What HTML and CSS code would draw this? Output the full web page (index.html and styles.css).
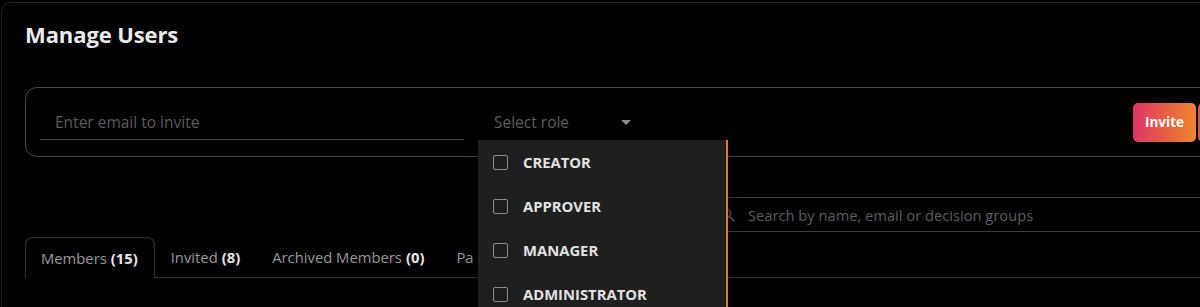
FILE: index.html
```html
<!DOCTYPE html>
<html lang="en">
<head>
<meta charset="utf-8">
<title>Manage Users</title>
<link rel="stylesheet" href="styles.css">
</head>
<body>
<div class="card">
  <h1 class="title">Manage Users</h1>

  <div class="invite-box">
    <div class="email-field"><span class="placeholder">Enter email to invite</span></div>
    <div class="role-select">
      <span class="placeholder">Select role</span>
      <svg class="caret" width="10" height="5" viewBox="0 0 10 5"><path d="M0 0 L10 0 L5 5 Z" fill="#8a8a8a"/></svg>
    </div>
    <div class="actions">
      <button class="btn-invite">Invite</button>
      <button class="btn-invite btn-next"></button>
    </div>
  </div>

  <div class="search-row">
    <div class="search-box">
      <svg class="search-icon" width="14" height="14" viewBox="0 0 14 14"><circle cx="5.5" cy="5.5" r="4.2" fill="none" stroke="#555" stroke-width="1.6"/><path d="M8.6 8.6 L12.8 12.8" stroke="#555" stroke-width="1.8" stroke-linecap="round"/></svg>
      <span class="placeholder search-ph">Search by name, email or decision groups</span>
    </div>
  </div>

  <div class="tabs">
    <div class="tab active">Members <b>(15)</b></div>
    <div class="tab">Invited <b>(8)</b></div>
    <div class="tab">Archived Members <b>(0)</b></div>
    <div class="tab">Pa</div>
    <div class="tab-fill"></div>
  </div>
</div>

<div class="dropdown">
  <div class="option"><span class="check"></span>CREATOR</div>
  <div class="option"><span class="check"></span>APPROVER</div>
  <div class="option"><span class="check"></span>MANAGER</div>
  <div class="option"><span class="check"></span>ADMINISTRATOR</div>
</div>
</body>
</html>
```

FILE: styles.css
```css
* { box-sizing: border-box; }
html, body {
  margin: 0;
  padding: 0;
  background: #000;
  overflow: hidden;
  height: 307px;
}
body {
  font-family: "Open Sans", "Noto Sans", sans-serif;
  color: #e6e6e6;
  position: relative;
}
.card {
  margin: 2px 0 0 1px;
  width: 1260px;
  height: 400px;
  border: 1px solid #262626;
  border-radius: 10px;
  padding: 16px 0 0 23px;
  background: #000;
}
.title {
  margin: 0;
  font-size: 22px;
  line-height: 30px;
  font-weight: 700;
  color: #ececec;
  letter-spacing: -0.1px;
}
.invite-box {
  margin-top: 38px;
  height: 70px;
  border: 1px solid #4a4a4a;
  border-radius: 12px;
  display: flex;
  align-items: center;
  padding: 0 0 0 14px;
}
.placeholder {
  color: #5c5c5c;
  font-size: 15.5px;
}
.email-field {
  width: 424px;
  height: 36px;
  border-bottom: 1px solid #4a4a4a;
  display: flex;
  align-items: center;
  padding: 0 0 0 15px;
}
.role-select {
  width: 180px;
  height: 36px;
  display: flex;
  align-items: center;
  padding: 0 0 0 30px;
}
.caret { margin-left: 52px; }
.actions {
  margin-left: 489px;
  display: flex;
  gap: 2px;
}
.btn-invite {
  width: 63px;
  height: 39px;
  border: none;
  border-radius: 5px;
  background: linear-gradient(90deg, #df3569 0%, #e8613f 55%, #ef8531 100%);
  color: #fff;
  font-family: inherit;
  font-weight: 700;
  font-size: 13.5px;
  padding: 0 0 1px 0;
}
.btn-next { width: 40px; background: #e0533e; }
.search-row {
  display: flex;
  margin-top: 40px;
}
.search-box {
  margin-left: 689px;
  width: 560px;
  height: 35px;
  border-top: 1px solid #3c3c3c;
  border-bottom: 1px solid #3c3c3c;
  display: flex;
  align-items: center;
  padding-left: 7px;
}
.search-icon { margin-right: 13px; }
.search-ph { font-size: 14.7px; }
.tabs {
  margin-top: 5px;
  display: flex;
  height: 41px;
}
.tab {
  padding: 0 16px;
  display: flex;
  align-items: center;
  font-size: 14.8px;
  color: #999;
  border-bottom: 1px solid #3a3a3a;
  white-space: nowrap;
}
.tab b { color: #e8e8e8; margin-left: 4px; font-weight: 700; }
.tab.active {
  border: 1px solid #333;
  border-bottom: none;
  border-radius: 8px 8px 0 0;
  padding: 0 16px 0 15px;
}
.tab-fill { flex: 1; border-bottom: 1px solid #3a3a3a; }
.dropdown {
  position: absolute;
  left: 478px;
  top: 140px;
  width: 250px;
  height: 200px;
  background: #1f1f1f;
  border-right: 2px solid #e8772e;
  box-shadow: 0 4px 10px rgba(0,0,0,0.5);
}
.option {
  height: 44px;
  display: flex;
  align-items: center;
  padding-left: 15px;
  font-size: 14.8px;
  font-weight: 700;
  color: #e2e2e2;
}
.check {
  width: 15px;
  height: 15px;
  border: 1.6px solid #8c8c8c;
  border-radius: 2px;
  margin-right: 15px;
}
```
